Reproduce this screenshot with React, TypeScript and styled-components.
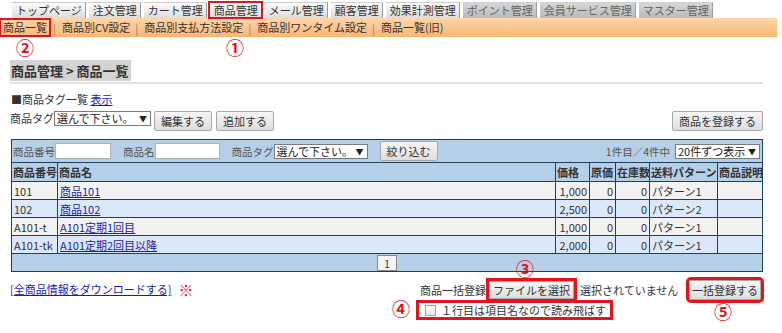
import React from "react";
import styled, { createGlobalStyle } from "styled-components";

const RED = "#e3141c";

const GlobalStyle = createGlobalStyle`
  html, body {
    margin: 0;
    padding: 0;
    background: #fff;
  }
  body {
    font-family: "Noto Sans CJK JP", "Noto Sans", sans-serif;
    font-size: 11px;
    color: #333;
  }
`;

const Page = styled.div`
  position: relative;
  width: 782px;
  height: 333px;
  overflow: hidden;
`;

const Tabs = styled.div`
  display: flex;
  gap: 2px;
  height: 18px;
  padding: 2px 0 0 11px;
  box-sizing: border-box;
`;

const Tab = styled.div<{ $dim?: boolean; $marked?: boolean }>`
  height: 16px;
  line-height: 15px;
  padding: 0 3px 0 4px;
  box-sizing: border-box;
  white-space: nowrap;
  color: ${(p) => (p.$dim ? "#666" : "#333")};
  background: ${(p) =>
    p.$dim
      ? "linear-gradient(#d6d6d6, #b9b9b9)"
      : "linear-gradient(#fbfbfb, #dcdcdc)"};
  border-top: 1px solid #d0d0d0;
  border-left: 1px solid #fff;
  border-right: 1px solid #9a9a9a;
  ${(p) => p.$marked && `outline: 2px solid ${RED}; outline-offset: -1px;`}
`;

const SubNav = styled.div`
  display: flex;
  align-items: center;
  width: 777px;
  height: 19px;
  background: linear-gradient(#fdd6ab, #f9b673);
  white-space: nowrap;
`;

const SubItem = styled.span<{ $marked?: boolean }>`
  padding: 0 2px 0 3px;
  line-height: 17px;
  ${(p) => p.$marked && `outline: 2px solid ${RED}; outline-offset: -1px; padding-right: 3px;`}
`;

const Sep = styled.span`
  color: #a08060;
  margin: 0 3px;
`;

const Content = styled.div`
  padding: 0 19px 0 10px;
`;

const Title = styled.div`
  display: inline-block;
  margin-top: 23px;
  height: 21px;
  line-height: 21px;
  padding: 0 2px 0 1px;
  background: #d3d3d3;
  font-size: 13px;
  font-weight: bold;
  color: #333;
`;

const Divider = styled.div`
  margin-top: 1px;
  height: 2px;
  background: #e0e0e0;
`;

const TagTitle = styled.div`
  margin-top: 8px;
  line-height: 14px;
  padding-left: 1px;
`;

const Link = styled.a`
  color: #1a1ab0;
  text-decoration: underline;
  cursor: pointer;
`;

const TagRow = styled.div`
  display: flex;
  align-items: flex-start;
  margin-top: 5px;
  height: 20px;
`;

const Select = styled.div<{ $w: number }>`
  display: flex;
  align-items: center;
  justify-content: space-between;
  width: ${(p) => p.$w}px;
  height: 15px;
  box-sizing: border-box;
  padding: 0 3px 0 2px;
  background: #fff;
  border: 1px solid #7a7a7a;
  font-size: 11px;
  line-height: 13px;
  color: #222;
  white-space: nowrap;
  span:last-child {
    font-size: 8px;
  }
`;

const Button = styled.button<{ $marked?: boolean; $tight?: boolean }>`
  height: 20px;
  padding: ${(p) => (p.$tight ? "0 2px" : "0 6px")};
  font-family: inherit;
  font-size: 11px;
  color: #333;
  background: linear-gradient(#f6f6f6, #dedede);
  border: 1px solid #a8a8a8;
  border-radius: 2px;
  white-space: nowrap;
  ${(p) => p.$marked && `outline: 3px solid ${RED}; outline-offset: 0px;`}
`;

const Table = styled.table`
  margin-top: 8px;
  margin-left: 1px;
  width: 751px;
  border-collapse: collapse;
  table-layout: fixed;
  border: 1px solid #1d3f62;
`;

const Cell = styled.td<{ $num?: boolean }>`
  height: 17px;
  padding: 0 2px;
  border: 1px solid #1d3f62;
  text-align: ${(p) => (p.$num ? "right" : "left")};
  white-space: nowrap;
  overflow: hidden;
  line-height: 16px;
`;

const HeadCell = styled.th`
  height: 18px;
  padding: 0 1px;
  border: 1px solid #1d3f62;
  background: #b5cfe6;
  font-weight: bold;
  text-align: left;
  white-space: nowrap;
  line-height: 16px;
`;

const Row = styled.tr<{ $alt?: boolean }>`
  background: ${(p) => (p.$alt ? "#dbe8f9" : "#f2f2f2")};
`;

const BarCell = styled.td`
  height: 22px;
  padding: 0 2px 0 1px;
  background: #b5cfe6;
  border: 1px solid #1d3f62;
`;

const SearchBar = styled.div`
  display: flex;
  align-items: center;
  font-size: 10.5px;
  color: #555;
`;

const Field = styled.label`
  display: flex;
  align-items: center;
  margin-right: 12px;
  white-space: nowrap;
`;

const Input = styled.div<{ $w: number }>`
  width: ${(p) => p.$w}px;
  height: 16px;
  box-sizing: border-box;
  background: #fff;
  border: 1px solid #b0b0b0;
`;

const Count = styled.div`
  margin-left: auto;
  display: flex;
  align-items: center;
  gap: 5px;
  white-space: nowrap;
`;

const PagerCell = styled.td`
  height: 17px;
  padding: 0;
  background: #b5cfe6;
  border: 1px solid #1d3f62;
  text-align: center;
`;

const PageButton = styled.span`
  display: inline-block;
  width: 20px;
  height: 16px;
  line-height: 16px;
  margin-top: 1px;
  box-sizing: border-box;
  background: #f4f4f4;
  border: 1px solid #8a8a8a;
  font-size: 10px;
  vertical-align: top;
`;

const Bottom = styled.div`
  display: flex;
  justify-content: space-between;
  margin-top: 7px;
`;

const Download = styled.div`
  display: flex;
  align-items: center;
  gap: 7px;
  padding-top: 2px;
  height: 16px;
`;

const Kome = styled.span`
  color: ${RED};
  font-size: 15px;
  font-weight: bold;
`;

const Bulk = styled.div`
  width: 345px;
  display: flex;
  flex-direction: column;
`;

const BulkRow = styled.div`
  display: flex;
  align-items: center;
  height: 22px;
  padding-left: 2px;
  white-space: nowrap;
`;

const FileButton = styled.span`
  display: inline-flex;
  align-items: center;
  height: 16px;
  margin: 0 6px 0 3px;
  padding: 0 3px;
  background: linear-gradient(#f6f6f6, #dedede);
  border: 1px solid #a8a8a8;
  outline: 3px solid ${RED};
  font-size: 11px;
`;

const SubmitWrap = styled.div`
  margin-left: auto;
  margin-right: 2px;
`;

const CheckLabel = styled.label`
  display: inline-flex;
  align-items: center;
  align-self: flex-start;
  height: 14px;
  margin-left: 1px;
  margin-top: 2px;
  padding: 0 4px 0 6px;
  outline: 3px solid ${RED};
  white-space: nowrap;
`;

const Box = styled.span`
  width: 9px;
  height: 9px;
  margin-right: 5px;
  border: 1px solid #a0a0a0;
  background: linear-gradient(#fdfdfd, #e6e6e6);
`;

const Mark = styled.span<{ $x: number; $y: number }>`
  position: absolute;
  left: ${(p) => p.$x}px;
  top: ${(p) => p.$y}px;
  color: ${RED};
  font-size: 18px;
  font-weight: bold;
  line-height: 18px;
`;

const tabs = [
  { label: "トップページ" },
  { label: "注文管理" },
  { label: "カート管理" },
  { label: "商品管理", marked: true },
  { label: "メール管理" },
  { label: "顧客管理" },
  { label: "効果計測管理" },
  { label: "ポイント管理", dim: true },
  { label: "会員サービス管理", dim: true },
  { label: "マスター管理", dim: true },
];

const subItems = [
  "商品一覧",
  "商品別CV設定",
  "商品別支払方法設定",
  "商品別ワンタイム設定",
  "商品一覧(旧)",
];

const products = [
  { code: "101", name: "商品101", price: "1,000", pattern: "パターン1" },
  { code: "102", name: "商品102", price: "2,500", pattern: "パターン2" },
  { code: "A101-t", name: "A101定期1回目", price: "1,000", pattern: "パターン1" },
  { code: "A101-tk", name: "A101定期2回目以降", price: "2,000", pattern: "パターン1" },
];

const App = () => (
  <Page>
    <GlobalStyle />
    <Tabs>
      {tabs.map((t) => (
        <Tab key={t.label} $dim={t.dim} $marked={t.marked}>
          {t.label}
        </Tab>
      ))}
    </Tabs>
    <SubNav>
      {subItems.map((s, i) => (
        <React.Fragment key={s}>
          {i > 0 && <Sep>|</Sep>}
          <SubItem $marked={i === 0}>{s}</SubItem>
        </React.Fragment>
      ))}
    </SubNav>

    <Content>
      <Title>商品管理 &gt; 商品一覧</Title>
      <Divider />
      <TagTitle>
        ■商品タグ一覧 <Link>表示</Link>
      </TagTitle>
      <TagRow>
        <span style={{ lineHeight: "15px" }}>商品タグ</span>
        <Select $w={97}>
          <span>選んで下さい。</span>
          <span>▼</span>
        </Select>
        <Button style={{ marginLeft: 3 }}>編集する</Button>
        <Button style={{ marginLeft: 4 }}>追加する</Button>
        <Button style={{ marginLeft: "auto" }}>商品を登録する</Button>
      </TagRow>

      <Table>
        <colgroup>
          <col style={{ width: 46 }} />
          <col style={{ width: 498 }} />
          <col style={{ width: 34 }} />
          <col style={{ width: 26 }} />
          <col style={{ width: 34 }} />
          <col style={{ width: 68 }} />
          <col style={{ width: 45 }} />
        </colgroup>
        <tbody>
          <tr>
            <BarCell colSpan={7}>
              <SearchBar>
                <Field>
                  商品番号
                  <Input $w={56} />
                </Field>
                <Field>
                  商品名
                  <Input $w={65} />
                </Field>
                <Field>
                  商品タグ
                  <Select $w={94}>
                    <span>選んで下さい。</span>
                    <span>▼</span>
                  </Select>
                </Field>
                <Button>絞り込む</Button>
                <Count>
                  <span>1件目／4件中</span>
                  <Select $w={85}>
                    <span>20件ずつ表示</span>
                    <span>▼</span>
                  </Select>
                </Count>
              </SearchBar>
            </BarCell>
          </tr>
          <tr>
            <HeadCell>商品番号</HeadCell>
            <HeadCell>商品名</HeadCell>
            <HeadCell>価格</HeadCell>
            <HeadCell>原価</HeadCell>
            <HeadCell>在庫数</HeadCell>
            <HeadCell>送料パターン</HeadCell>
            <HeadCell>商品説明</HeadCell>
          </tr>
          {products.map((p, i) => (
            <Row key={p.code} $alt={i % 2 === 1}>
              <Cell>{p.code}</Cell>
              <Cell>
                <Link>{p.name}</Link>
              </Cell>
              <Cell $num>{p.price}</Cell>
              <Cell $num>0</Cell>
              <Cell $num>0</Cell>
              <Cell>{p.pattern}</Cell>
              <Cell />
            </Row>
          ))}
          <tr>
            <PagerCell colSpan={7}>
              <PageButton>1</PageButton>
            </PagerCell>
          </tr>
        </tbody>
      </Table>

      <Bottom>
        <Download>
          <Link>[全商品情報をダウンロードする]</Link>
          <Kome>※</Kome>
        </Download>
        <Bulk>
          <BulkRow>
            商品一括登録
            <FileButton>ファイルを選択</FileButton>
            選択されていません
            <SubmitWrap>
              <Button $marked $tight>
                一括登録する
              </Button>
            </SubmitWrap>
          </BulkRow>
          <CheckLabel>
            <Box />
            １行目は項目名なので読み飛ばす
          </CheckLabel>
        </Bulk>
      </Bottom>
    </Content>

    <Mark $x={16} $y={38}>②</Mark>
    <Mark $x={226} $y={38}>①</Mark>
    <Mark $x={516} $y={259}>③</Mark>
    <Mark $x={392} $y={299}>④</Mark>
    <Mark $x={714} $y={302}>⑤</Mark>
  </Page>
);

export default App;
